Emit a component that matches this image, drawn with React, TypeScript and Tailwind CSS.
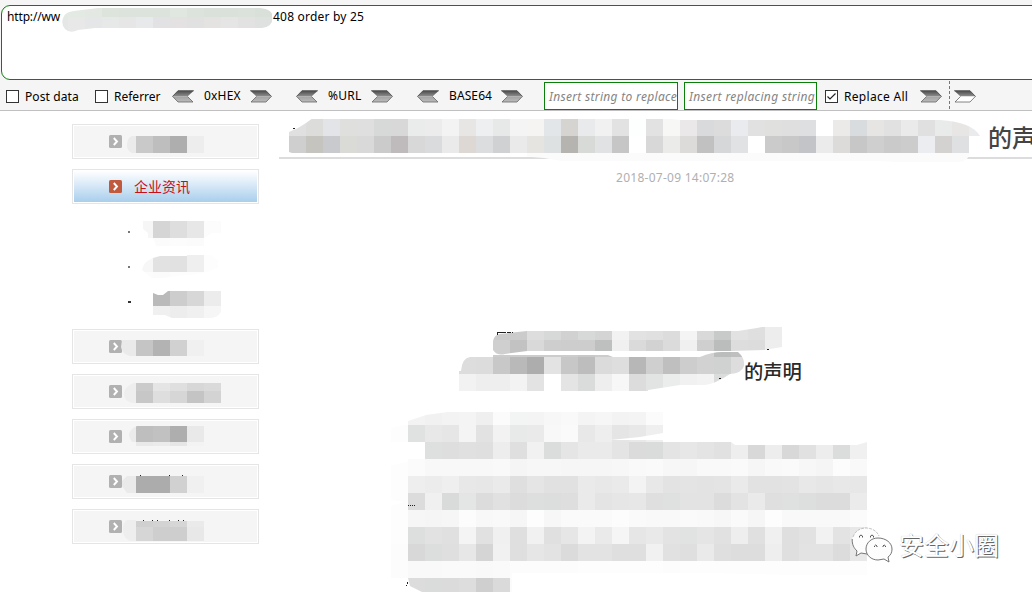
import React from "react";

type Band = { x: number; y: number; h: number; c: string };
type MosaicProps = {
  box: [number, number, number, number];
  bands: Band[];
  clip?: string;
  id: string;
  specks?: [number, number][];
  className?: string;
};

const CELL = 17;

const tone = (v: string) => (v.length === 2 ? `#${v}${v}${v}` : `#${v}`);

function Mosaic({ box, bands, clip, id, specks = [], className = "" }: MosaicProps) {
  return (
    <svg
      width={box[2]}
      height={box[3]}
      viewBox={box.join(" ")}
      shapeRendering="crispEdges"
      className={`block shrink-0 overflow-visible ${className}`}
    >
      {clip && (
        <clipPath id={id}>
          <path d={clip} />
        </clipPath>
      )}
      <g clipPath={clip ? `url(#${id})` : undefined}>
        {bands.map((b, r) =>
          b.c.split(" ").map((v, i) => (
            <rect key={`${r}-${i}`} x={b.x + i * CELL} y={b.y} width={CELL} height={b.h} fill={tone(v)} />
          ))
        )}
      </g>
      {specks.map(([x, y]) => (
        <rect key={`${x}-${y}`} x={x} y={y} width="1" height="1" fill="#222" />
      ))}
    </svg>
  );
}

function Arrow({ flip = false, hollow = false, className = "" }: { flip?: boolean; hollow?: boolean; className?: string }) {
  return (
    <svg width="22" height="13" viewBox="0 0 22 13" className={`block shrink-0 ${flip ? "-scale-x-100" : ""} ${className}`}>
      <defs>
        <linearGradient id="arrowTop" x1="0" y1="0" x2="0" y2="1">
          <stop offset="0" stopColor="#484848" />
          <stop offset="1" stopColor="#909090" />
        </linearGradient>
        <linearGradient id="arrowBottom" x1="0" y1="0" x2="0" y2="1">
          <stop offset="0" stopColor="#a2a2a2" />
          <stop offset="1" stopColor="#bcbcbc" />
        </linearGradient>
      </defs>
      <path d="M0 .5H16L22 6.5H6.5Z" fill="url(#arrowTop)" />
      <path d="M6.5 6.5H21.3L16 12H1Z" fill={hollow ? "#fff" : "url(#arrowBottom)"} />
      <path d="M6.5 6.500L1 12H16L21.300 6.500" fill="none" stroke="#666" strokeWidth=".8" />
      <path d="M.3 .8H16L21.4 6.5" fill="none" stroke="#555" strokeWidth=".8" />
    </svg>
  );
}

function Check({ on = false, className = "" }: { on?: boolean; className?: string }) {
  return (
    <span className={`block h-[13px] w-[13px] shrink-0 border border-[#333] bg-white ${className}`}>
      {on && (
        <svg width="11" height="11" viewBox="0 0 11 11" className="block">
          <path d="M1.5 5.5L4 8L9.5 2.5" fill="none" stroke="#222" strokeWidth="1.2" />
        </svg>
      )}
    </span>
  );
}

function Chevron({ active = false }: { active?: boolean }) {
  return (
    <svg width="13" height="13" viewBox="0 0 13 13" className="block shrink-0">
      <rect width="13" height="13" rx="1.5" fill={active ? "#c15a3d" : "#b1b1b1"} />
      <path d="M4.8 3L8 6.5L4.8 10" fill="none" stroke="#fff" strokeWidth="1.9" />
    </svg>
  );
}

const items: { top: number; clip: string; bands: Band[]; specks?: [number, number][] }[] = [
  {
    top: 124,
    clip: "M132 136H204V153H132Q127 151 127 145Q127 138 132 136Z",
    bands: [{ x: 119, y: 136, h: 17, c: "eb c9 be ae ed" }],
  },
  {
    top: 329,
    clip: "M122 340H204V356H130Q122 354 121 347Z",
    bands: [{ x: 119, y: 340, h: 16, c: "ea c5 b3 d1 f0" }],
  },
  {
    top: 374,
    clip: "M134 383H221V403H132Q124 401 124 393Q125 386 134 383Z",
    bands: [
      { x: 119, y: 383, h: 8, c: "ee cb e5 df d7 da" },
      { x: 119, y: 391, h: 12, c: "ee c7 de d6 c4 d3" },
    ],
  },
  {
    top: 419,
    clip: "M137 426H204V446H136V442H132Q129 438 129 434Q131 428 137 426Z",
    bands: [
      { x: 119, y: 426, h: 16, c: "eb be c1 ae e9" },
      { x: 119, y: 442, h: 4, c: "eb e9 eb e6 f3" },
    ],
  },
  {
    top: 464,
    clip: "M127 476H204V493H127L122 486V481Z",
    bands: [{ x: 119, y: 476, h: 17, c: "ea ac ac d1 f0" }],
    specks: [[140, 475], [169, 475], [182, 475]],
  },
  {
    top: 509,
    clip: "M127 520H136V521H204V541H130Q123 538 123 530Q123 522 127 520Z",
    bands: [
      { x: 119, y: 520, h: 7, c: "ee d0 d3 d6 ea" },
      { x: 119, y: 527, h: 14, c: "ee d6 ce ce e8" },
    ],
    specks: [[143, 520], [152, 520], [157, 520], [169, 520], [178, 520], [183, 520]],
  },
];

const subs: { top: number; clip: string; bands: Band[] }[] = [
  {
    top: 214,
    clip: "M143 221H221V233H212L204 238V246H156L153 238H148V233L143 229Z",
    bands: [
      { x: 136, y: 221, h: 17, c: "f6 d5 de e7 fc" },
      { x: 136, y: 238, h: 8, c: "fd fb fc fb" },
    ],
  },
  {
    top: 249,
    clip: "M142 270Q144 261 153 258L160 256H187V255H210L218 260V268L204 273L170 277L153 279Z",
    bands: [
      { x: 136, y: 255, h: 17, c: "f7 e2 e1 ef fd" },
      { x: 136, y: 272, h: 6, c: "fc fb fd fd" },
    ],
  },
  {
    top: 284,
    clip: "M153 293L158 295H163L168 291H221V312Q217 318 210 318H172L165 315H153Z",
    bands: [
      { x: 153, y: 291, h: 15, c: "ba cd d7 ec" },
      { x: 153, y: 306, h: 12, c: "f0 ed f0 f6" },
    ],
  },
];

function MenuItem({ item }: { item: (typeof items)[number] }) {
  return (
    <li className="h-[35px] border border-[#e5e5e5] bg-white p-px">
      <div className="flex h-[31px] items-center bg-[#f5f5f5] pl-[35px]">
        <Chevron />
        <Mosaic
          id={`item${item.top}`}
          box={[122, item.top + 2, 100, 31]}
          bands={item.bands}
          clip={item.clip}
          specks={item.specks}
        />
      </div>
    </li>
  );
}

const titleBands: Band[] = [
  {
    x: 289, y: 119, h: 17,
    c: "e0 dcdcdb e2e4e7 dfdfde df d6d9d8 d8 e9ecea ebeceb f3 e8e6e4 eeeff1 e7e9e8 f4 f6f4f2 e3e6e8 d6d4d1 e8eaec f1 e2 fdfffe e2 f7f8f6 eae8e9 d9dadb dc e9ebee e1 e0e0df df dedfe1 ff ebeae8 d9dcdf e7e5e3 e1 ea e0 e9ebea e8e6e4 e9ebed",
  },
  {
    x: 289, y: 136, h: 17,
    c: "cf c5c4bf c9cace dadad6 d9 cb bfbbbd d8 d9dbdd ea ddd8d4 dbdddf d0d1d3 ea e5e4e1 dde1e1 b5b4b1 d8dad8 e1e2e4 c6 ff d8 ebebea dcdbd9 c1 d5d7d9 e1e2e4 ff cb c8 c3c4c8 eb dddbda c7 cf ca cc ebedf0 d4d2d0 dfe0e2",
  },
];

const lineOne: Band[] = [
  { x: 493, y: 327, h: 13, c: "cb cb dd d7d9d8 d1 d7d9d8 d4 f2 e2 e0 dc f4 d9 c8cac9 e2 df ed" },
  { x: 493, y: 340, h: 16, c: "cf c2 d9 ce cd cd bdc0bf f0 da d2 db f0 cf babdbc dd dc ee" },
];

const lineTwo: Band[] = [
  { x: 459, y: 351, h: 6, c: "dd dc cc cc cc cc cc c8 cc db b7 cf bf cd d2 bbbdbc bf" },
  { x: 459, y: 357, h: 17, c: "dd dc c8 b9 ad e3 c7 bd db de b7 cf bf cd d2 d0d2d1 dd" },
  { x: 459, y: 374, h: 17, c: "f2 ee ee f3 e3 ff e4 dadcdb ee f7 dc e1e4e3 ebedec f1 f3 dbdddc e1" },
];

const paragraph: Band[] = [
  { x: 408, y: 412, h: 13, c: "f3 f1 f3 f4 ef fb f3f5f5 f4 f7 f9 f4 f6 f3 f4 fb" },
  { x: 391, y: 425, h: 17, c: "fd e0e2e1 e8 e6 f4 e2 f2 e8eae9 ea f8 fa e8 ee e5 e8 ef" },
  { x: 425, y: 442, h: 17, c: "dee0df de e0 df ed df f1 dadddc e5 ea ea e4 db d9dcdb e4 e7 e4 e1 ee d8 ed d8 e1 ed dadddc f0" },
  { x: 391, y: 459, h: 17, c: "fd fb f8 f8 f8 f8 f9 f5 f7 f7 f6 f6 f6 f7 f9 fa f7 f6 f9 f9 fa f6 f9 fa f7 f5 fc f9" },
  { x: 391, y: 476, h: 17, c: "fd ee ec ef e8 e7 ea df e5 e1 e1 ea e8 ea f3 e8 e3 e4 e3 e4 ea e2 e2 e3 e8 e6 e8 e7" },
  { x: 391, y: 493, h: 17, c: "fd dc f0 d8dbda e4e6e5 dc e1 dc dddfde dcdedd de ea e4 e6 e7 df dfe1e0 e3 e3 dc e3 ea df dee1e0 dddfde dc dc eb" },
  { x: 391, y: 510, h: 17, c: "fd f6 f5 f6 fc f8 f9 f6 fd f7 fa fa fa fc fa f9 f9 fa f9 f7 fa f6 fd f9 f9 f9 f9 fb" },
  { x: 391, y: 527, h: 17, c: "fd dddfde e2 e0 f4 e1 f0 df f1 e0 e6 f3 ea f5 e6 e9 e3 e0e3e2 e5 e1 ee e0 f0 df e2 f2 e3 e8" },
  { x: 391, y: 544, h: 17, c: "fc d8 dcdedd df e7 d5 f1 df e6 e3 db e3 e3 df df f1 e1 df ea df dd dd ee df e3 e3 dc e8" },
  { x: 391, y: 561, h: 17, c: "fc f9 f9 fa fa f9 fa fc fc fc fc fd fd fd fd fd fc fd fd fd fd fd fd fd fd fd fd fd" },
  { x: 408, y: 578, h: 14, c: "dc dadcdb db dd cf da fb" },
];

const uiFont = "font-['Noto_Sans','Noto_Sans_CJK_SC',sans-serif]";

function HackBar() {
  return (
    <header className="h-[111px] overflow-hidden border-b border-[#c0c0c0] bg-[#f5f5f5] pt-[5px] text-black">
      <div className="ml-px flex h-[75px] w-[1050px] items-start rounded-[9px] border border-[#0a800a] bg-white pl-[5px] pt-[3px] text-[12px] leading-4">
        <span className="w-[55px] shrink-0 whitespace-nowrap tracking-[-0.15px]">http://ww</span>
        <Mosaic
          id="address"
          className="relative"
          box={[62, 9, 211, 22]}
          clip="M64 16Q66 12 74 11L98 8H260Q273 9 273 18Q272 27 262 28H95L78 30Q70 34 65 29Q60 23 64 16Z"
          bands={[
            { x: 51, y: 8, h: 9, c: "e3e9e3 e3e9e3 e3e8e2 dce4dc dbe3dc dbe3dc dce3dd e0e6e0 dce3dd dae1da dae1da dbe2dc d9e0da" },
            { x: 51, y: 17, h: 17, c: "e5e6e6 e8e8e8 e5e6e7 e7e8e8 e6e6e6 e8e9ea e2e2e4 e3e1e2 e1e1e1 e5e3e2 e5e5e5 e2e2e3 dfe0e0" },
          ]}
        />
        <span className="whitespace-nowrap tracking-[0.2px]">408 order by 25</span>
      </div>
      <div className="flex h-[30px] items-center text-[12px] leading-4 whitespace-nowrap">
        <Check className="ml-[6px] mt-[3px]" />
        <span className="ml-[6px] mt-[3px] w-[70px] tracking-[0.1px]">Post data</span>
        <Check className="mt-[3px]" />
        <span className="ml-[6px] mt-[3px] w-[58px]">Referrer</span>
        <Arrow flip className="mt-[2px]" />
        <span className="ml-[10px] mt-px w-[46px] tracking-[0.2px]">0xHEX</span>
        <Arrow className="mt-[2px]" />
        <Arrow flip className="ml-[24px] mt-[2px]" />
        <span className="ml-[10px] mt-px w-[43px] tracking-[0.3px]">%URL</span>
        <Arrow className="mt-[2px]" />
        <Arrow flip className="ml-[24px] mt-[2px]" />
        <span className="ml-[10px] mt-px w-[52px] tracking-[0.1px]">BASE64</span>
        <Arrow className="mt-[2px]" />
        <div className="ml-[21px] mt-[2px] h-[28px] w-[134px] shrink-0 overflow-hidden border border-[#0a800a] bg-white pl-[4px] pt-[6px] text-[12px] tracking-[0.31px] text-[#848484] italic">
          Insert string to replace
        </div>
        <div className="ml-[6px] mt-[2px] h-[28px] w-[133px] shrink-0 overflow-hidden border border-[#0a800a] bg-white pl-[4px] pt-[6px] text-[12px] tracking-[0.36px] text-[#848484] italic">
          Insert replacing string
        </div>
        <Check on className="ml-[8px] mt-[3px]" />
        <span className="ml-[6px] mt-[3px] w-[76px] tracking-[0.3px]">Replace All</span>
        <Arrow className="mt-[2px]" />
        <span className="ml-[7px] h-[28px] w-px border-l border-dashed border-[#777]" />
        <Arrow hollow className="ml-[4px] mt-[2px]" />
      </div>
    </header>
  );
}

function Sidebar() {
  return (
    <aside className="ml-[72px] w-[187px] shrink-0 pt-[13px]">
      <ul className="flex flex-col gap-[10px]">
        <MenuItem item={items[0]} />
        <li className="h-[35px] border border-[#e5e5e5] bg-white p-px">
          <div className="flex h-[31px] items-center bg-linear-to-b from-white to-[#a9ceec] pl-[35px]">
            <Chevron active />
            <span className="ml-[12px] text-[14px] leading-[31px] font-normal text-[#cc0d16]">企业资讯</span>
          </div>
        </li>
        <li>
          <ul>
            {subs.map((s, i) => (
              <li key={s.top} className="flex h-[35px] items-center pl-[56px]">
                <i className={`block h-[2px] shrink-0 ${i === 2 ? "w-[3px] bg-[#333]" : "w-[2px] bg-[#777]"}`} />
                <Mosaic
                  id={`sub${s.top}`}
                  box={[i === 2 ? 131 : 130, s.top, 91, 35]}
                  bands={s.bands}
                  clip={s.clip}
                />
              </li>
            ))}
          </ul>
        </li>
        {items.slice(1).map((item) => (
          <MenuItem key={item.top} item={item} />
        ))}
      </ul>
    </aside>
  );
}

function Article() {
  return (
    <main className="ml-[20px] w-[753px] shrink-0">
      <h1 className="flex h-[48px] items-start border-b-2 border-[#dcdcdc] pl-[10px]">
        <Mosaic
          id="title"
          box={[289, 111, 691, 46]}
          clip="M289 132L298 128L306 123L313 118H544V118H663L680 120H940Q972 122 980 136H969V155Q967 162 959 162H897L880 161H561L544 158L520 156L480 153H292L289 152Z"
          bands={[
            { x: 527, y: 153, h: 9, c: "fb fb fb fb fb fb fb fb fb fb fb fb fb fb fb fb fb fb fb fb fb fb fb fb fb fb fb" },
            ...titleBands,
          ]}
          specks={[[293, 128], [294, 128]]}
        />
        <span className="ml-[8px] mt-[9px] shrink-0 text-[24px] leading-9 font-medium whitespace-nowrap text-[#444]">
          的声
        </span>
      </h1>
      <p className="mt-[11px] pl-[337px] text-[12px] leading-4 tracking-[0.27px] text-[#b0b0b0]">2018-07-09 14:07:28</p>
      <div className="mt-[141px] pl-[214px]">
        <Mosaic
          id="lineOne"
          box={[493, 327, 290, 24]}
          clip="M493 341Q494 335 500 334L527 331H738L757 328L762 327H782V347L764 350L731 351H527L505 354Q497 356 493 350Z"
          bands={lineOne}
          specks={[[497, 332], [497, 333], [497, 334], [498, 332], [499, 332], [500, 332], [501, 332], [502, 332], [503, 332], [504, 332], [505, 332], [507, 332], [508, 332], [509, 332], [510, 332], [512, 332], [767, 349], [768, 349]]}
        />
      </div>
      <div className="flex h-[41px] items-start pl-[180px]">
        <Mosaic
          id="lineTwo"
          box={[459, 351, 285, 41]}
          clip="M459 371H461Q462 358 470 357H493V355H608L613 357H700Q712 352 722 352H738Q745 358 744 366Q742 373 730 374Q715 384 705 385H680L648 390V391H459Z"
          bands={lineTwo}
          specks={[[719, 378], [720, 378]]}
        />
        <span className="mt-[6px] text-[19.3px] leading-[30px] font-medium text-[#2a2a2a]">的声明</span>
      </div>
      <div className="mt-[20px] pl-[112px]">
        <Mosaic
          id="paragraph"
          box={[391, 412, 476, 180]}
          clip="M408 421L426 415L448 412H663V433L640 437L610 440H663V442H731L735 445H857L867 442V575H794L750 574L712 573H512V592H422L410 586L408 578H391V506L404 502L391 500V465L408 462V459H425V442H391V428L408 424Z"
          bands={paragraph}
          specks={[[408, 505], [410, 505], [412, 505], [414, 505], [407, 582], [407, 583], [406, 585]]}
        />
      </div>
    </main>
  );
}

function Watermark() {
  return (
    <div className="absolute top-[526px] left-[850px] flex items-center">
      <svg width="44" height="38" viewBox="0 0 44 38" className="block">
        <path
          d="M16 2C8 2 2 8 2 15C2 19 4 22 7 25L6 30L11 27L18 28C26 28 31 22 31 15C31 8 24 2 16 2Z"
          fill="#fdfdfd"
        />
        <path d="M2.200 13C2 19 4 22 7 25L6 30L11 27L17 28" fill="none" stroke="#777" strokeWidth="1" />
        <path d="M3 11C5 5 10 2 16 2C22 2 27 5 29 10" fill="none" stroke="#aaa" strokeWidth=".7" strokeDasharray="3 1" />
        <path
          d="M28 12C21 12 16 17 16 23C16 29 21 34 28 34L34 33L39 36L38 31C41 29 42 26 42 23C42 17 36 12 28 12Z"
          fill="#fdfdfd"
          stroke="#666"
          strokeWidth=".9"
        />
        <g fill="none" stroke="#555" strokeWidth="1">
          <path d="M9.500 11.500V10Q11 8 12.500 10V11.500M20.500 11.500V10Q22 8 23.500 10V11.500M24.500 21V20Q25.500 18 27 20V21M33 21V20Q34 18 35.500 20V21" />
        </g>
      </svg>
      <span className="ml-[5px] text-[25px] leading-[38px] text-white [text-shadow:1px_1px_0_#666,0_0_1px_#bbb]">
        安全小圈
      </span>
    </div>
  );
}

export default function App() {
  return (
    <div className={`relative h-[592px] w-full overflow-hidden bg-white ${uiFont}`}>
      <HackBar />
      <div className="flex items-start">
        <Sidebar />
        <Article />
      </div>
      <Watermark />
    </div>
  );
}
